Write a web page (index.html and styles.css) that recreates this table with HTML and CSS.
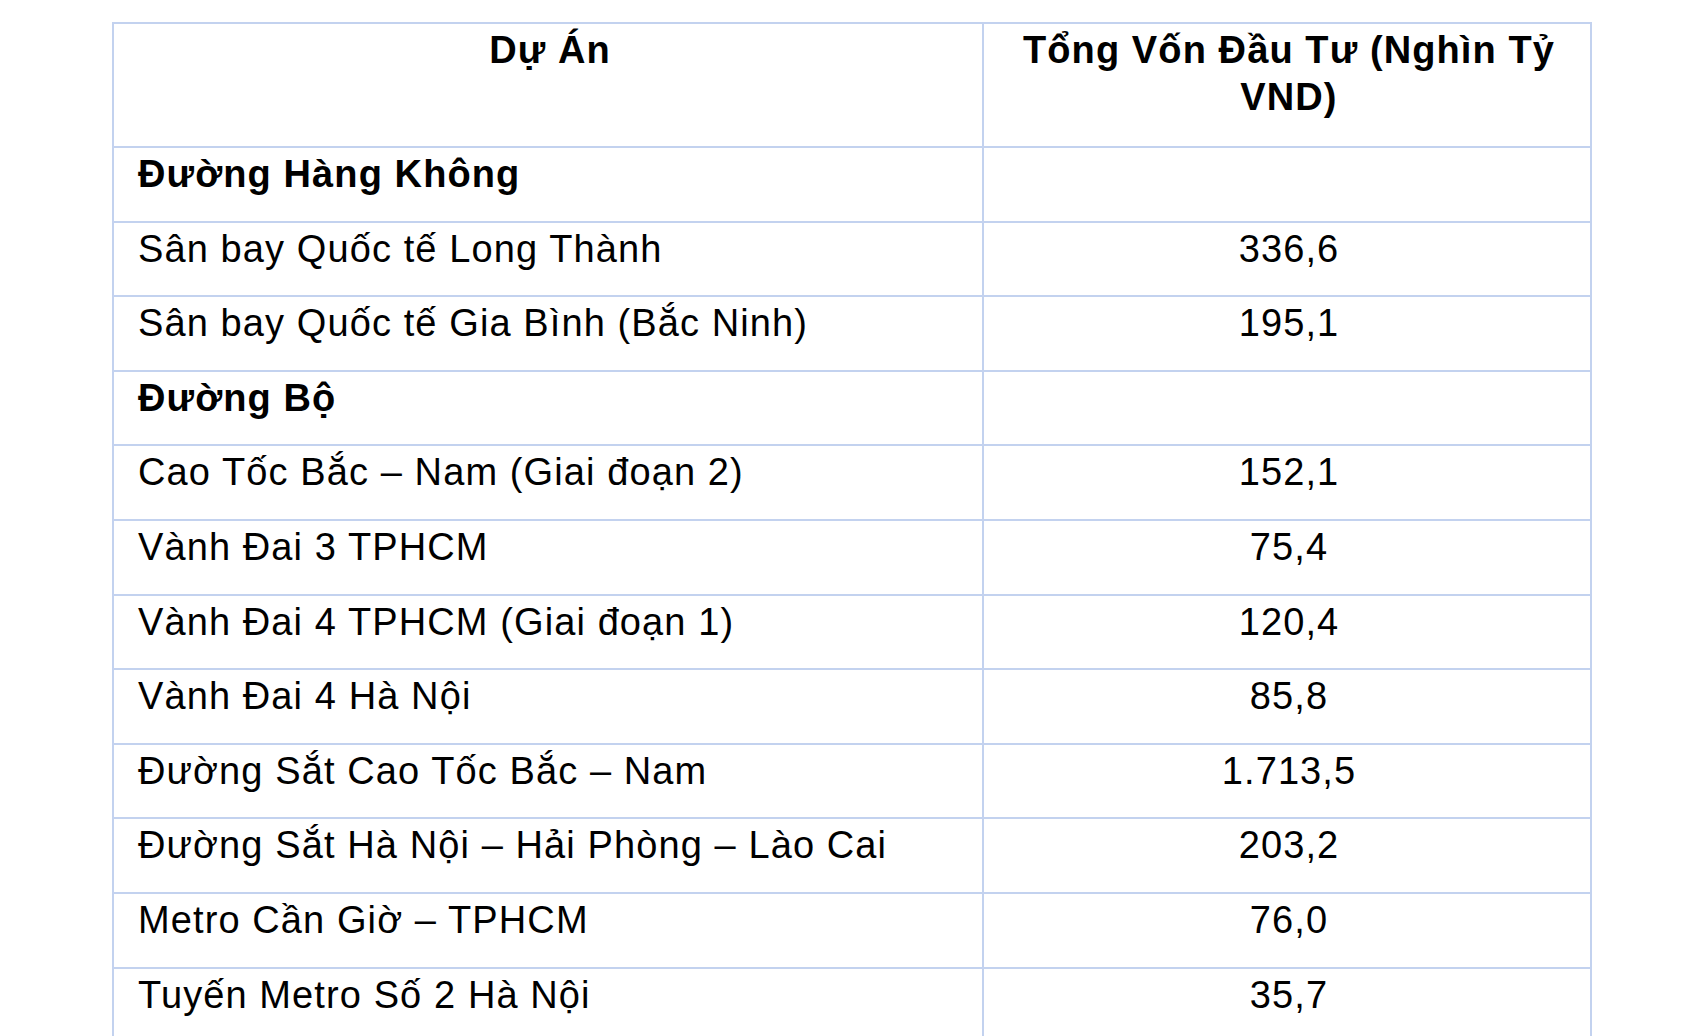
FILE: index.html
```html
<!DOCTYPE html>
<html lang="vi">
<head>
<meta charset="utf-8">
<title>Dự Án</title>
<link rel="stylesheet" href="styles.css">
</head>
<body>
<div class="page">
  <table class="invest">
    <colgroup>
      <col class="col-name">
      <col class="col-value">
    </colgroup>
    <thead>
      <tr class="head-row">
        <th>Dự Án</th>
        <th>Tổng Vốn Đầu Tư (Nghìn Tỷ VND)</th>
      </tr>
    </thead>
    <tbody>
      <tr class="group"><td>Đường Hàng Không</td><td></td></tr>
      <tr><td>Sân bay Quốc tế Long Thành</td><td class="num">336,6</td></tr>
      <tr><td>Sân bay Quốc tế Gia Bình (Bắc Ninh)</td><td class="num">195,1</td></tr>
      <tr class="group"><td>Đường Bộ</td><td></td></tr>
      <tr><td>Cao Tốc Bắc – Nam (Giai đoạn 2)</td><td class="num">152,1</td></tr>
      <tr><td>Vành Đai 3 TPHCM</td><td class="num">75,4</td></tr>
      <tr><td>Vành Đai 4 TPHCM (Giai đoạn 1)</td><td class="num">120,4</td></tr>
      <tr><td>Vành Đai 4 Hà Nội</td><td class="num">85,8</td></tr>
      <tr><td>Đường Sắt Cao Tốc Bắc – Nam</td><td class="num">1.713,5</td></tr>
      <tr><td>Đường Sắt Hà Nội – Hải Phòng – Lào Cai</td><td class="num">203,2</td></tr>
      <tr><td>Metro Cần Giờ – TPHCM</td><td class="num">76,0</td></tr>
      <tr><td>Tuyến Metro Số 2 Hà Nội</td><td class="num">35,7</td></tr>
      <tr><td>&nbsp;</td><td></td></tr>
    </tbody>
  </table>
</div>
</body>
</html>
```

FILE: styles.css
```css
html, body {
  margin: 0;
  padding: 0;
  background: #ffffff;
}

body {
  font-family: "Liberation Sans", Arial, sans-serif;
  color: #000000;
  overflow: hidden;
  height: 1036px;
}

.page {
  padding: 22px 0 0 112px;
}

.invest {
  border-collapse: collapse;
  width: 1478px;
  table-layout: fixed;
  font-size: 38px;
  line-height: 47px;
  letter-spacing: 1.1px;
}

.col-name {
  width: 870px;
}

.col-value {
  width: 608px;
}

.invest th,
.invest td {
  border: 2px solid #c3d2ef;
  vertical-align: top;
  padding: 3px 20px 0 24px;
  box-sizing: border-box;
}

.invest th {
  font-weight: bold;
  text-align: center;
}

.head-row {
  height: 124px;
}

.invest tbody tr {
  height: 74.6px;
}

.group td {
  font-weight: bold;
}

.invest td.num {
  text-align: center;
}
```
